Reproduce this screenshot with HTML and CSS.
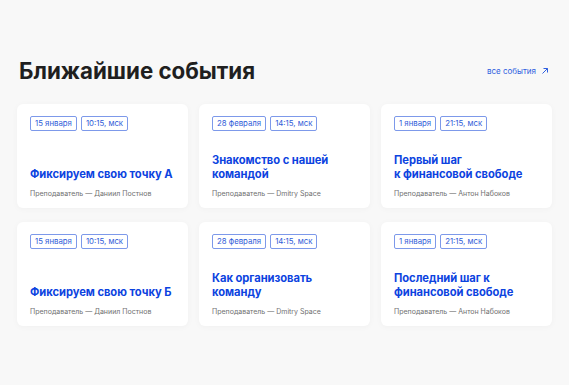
FILE: index.html
```html
<!DOCTYPE html>
<html lang="ru">
<head>
<meta charset="utf-8">
<title>Ближайшие события</title>
<link rel="stylesheet" href="styles.css">
</head>
<body>
<section class="events">
  <header class="events-head">
    <h2 class="events-title">Ближайшие события</h2>
    <a class="events-all" href="#">все события
      <svg class="arrow" width="8" height="8" viewBox="0 0 8 8"><path d="M1.5 6.5 L6.5 1.5 M2.5 1.5 H6.5 V5.5" fill="none" stroke="currentColor" stroke-width="1"/></svg>
    </a>
  </header>
  <div class="grid">
    <article class="card">
      <div class="tags"><span class="tag">15 января</span><span class="tag">10:15, мск</span></div>
      <div class="card-body">
        <h3 class="card-title">Фиксируем свою точку А</h3>
        <p class="card-teacher">Преподаватель — Даниил Постнов</p>
      </div>
    </article>
    <article class="card">
      <div class="tags"><span class="tag">28 февраля</span><span class="tag">14:15, мск</span></div>
      <div class="card-body">
        <h3 class="card-title">Знакомство с нашей<br>командой</h3>
        <p class="card-teacher">Преподаватель — Dmitry Space</p>
      </div>
    </article>
    <article class="card">
      <div class="tags"><span class="tag">1 января</span><span class="tag">21:15, мск</span></div>
      <div class="card-body">
        <h3 class="card-title">Первый шаг<br>к финансовой свободе</h3>
        <p class="card-teacher">Преподаватель — Антон Набоков</p>
      </div>
    </article>
    <article class="card">
      <div class="tags"><span class="tag">15 января</span><span class="tag">10:15, мск</span></div>
      <div class="card-body">
        <h3 class="card-title">Фиксируем свою точку Б</h3>
        <p class="card-teacher">Преподаватель — Даниил Постнов</p>
      </div>
    </article>
    <article class="card">
      <div class="tags"><span class="tag">28 февраля</span><span class="tag">14:15, мск</span></div>
      <div class="card-body">
        <h3 class="card-title">Как организовать<br>команду</h3>
        <p class="card-teacher">Преподаватель — Dmitry Space</p>
      </div>
    </article>
    <article class="card">
      <div class="tags"><span class="tag">1 января</span><span class="tag">21:15, мск</span></div>
      <div class="card-body">
        <h3 class="card-title">Последний шаг к<br>финансовой свободе</h3>
        <p class="card-teacher">Преподаватель — Антон Набоков</p>
      </div>
    </article>
  </div>
</section>
</body>
</html>
```

FILE: styles.css
```css
* { box-sizing: border-box; }
html, body { margin: 0; padding: 0; }
body {
  background: #f8f8f8;
  font-family: Inter, "Noto Sans", sans-serif;
  width: 569px;
  height: 385px;
  overflow: hidden;
}
.events {
  padding: 57px 17px 0 17px;
}
.events-head {
  display: flex;
  justify-content: space-between;
  align-items: center;
  height: 28px;
  margin-bottom: 19px;
}
.events-title {
  margin: 0;
  padding-left: 2px;
  font-size: 22.3px;
  line-height: 28px;
  font-weight: 700;
  color: #1f1f1f;
}
.events-all {
  display: flex;
  align-items: center;
  gap: 5px;
  margin-right: 3px;
  font-size: 8px;
  color: #2f5fe0;
  text-decoration: none;
}
.arrow { display: block; }
.grid {
  display: grid;
  grid-template-columns: repeat(3, 171px);
  column-gap: 11px;
  row-gap: 14px;
}
.card {
  height: 104px;
  background: #fff;
  border-radius: 6px;
  box-shadow: 0 1px 6px rgba(0, 0, 0, 0.035);
  padding: 12px 13px 10px 13px;
  display: flex;
  flex-direction: column;
  justify-content: space-between;
}
.tags {
  display: flex;
  gap: 4px;
}
.tag {
  height: 15px;
  padding: 0 4px;
  border: 1px solid #7d99ea;
  border-radius: 2px;
  font-size: 7.8px;
  line-height: 13px;
  color: #2f5cd8;
}
.card-title {
  margin: 0 0 8px 0;
  font-size: 11.2px;
  line-height: 13.5px;
  font-weight: 700;
  white-space: nowrap;
  letter-spacing: -0.05px;
  color: #0c43e0;
}
.card-teacher {
  margin: 0;
  font-size: 7px;
  line-height: 9px;
  color: #707070;
}
```
